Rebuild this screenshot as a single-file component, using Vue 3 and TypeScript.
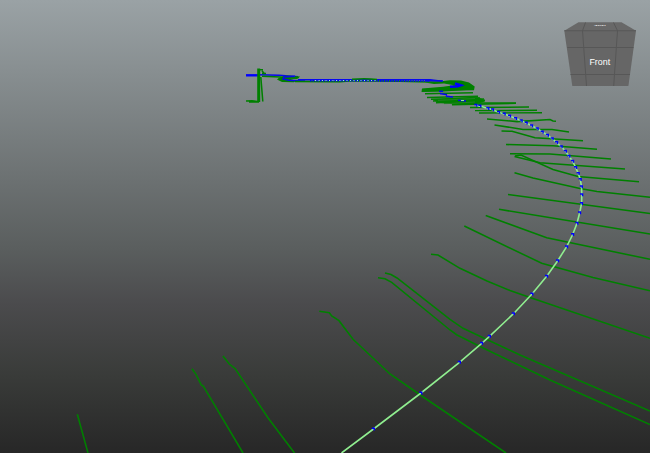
<script setup lang="ts">
type Point = [number, number]

// Cross-section profiles cut perpendicular to the alignment
const sections: string[] = [
  '487,119 517,121.6 550,119.5 553,121 556,121.3',
  '494.5,125 523,129.4 552,129.5 569,132',
  '501.5,131 512,131.3 535,137.7 583,140.7',
  '506,144.5 553,145.8 597,149.3',
  '510,153.7 550,154 611,159',
  '514.5,156.5 540,162.8 625,169',
  '515,156 521,155 553,169.5 578,176.5 639,181.7',
  '514.5,172.7 533,178 580,188.5 597,191.5 650,197.3',
  '508,194.5 650,213.5',
  '499,209.3 650,234',
  '485.7,215.5 546.7,237.8 650,259.3',
  '464.3,226 541.7,263.3 593,277.5 650,290.8',
  '431,254.3 438,255 460,268.3 487,281 510,290.5 530,297.5 650,338.3',
  '385,273 391,274.5 397,278 450,319.3 463,328.3 520,355 650,411',
  '378,277.7 385,278.7 391.7,282.3 450,330 457,335 480,346.5 550,380 650,424.5',
  '319.3,311.3 329.3,312.7 331.7,316 339,320.7 353,339.3 390,374 421.7,396 506,453',
  '77.3,414.3 88,453',
  '192,368.7 196,374.3 201.3,385 203.3,386 243,453',
  '223,356 229.3,364 235.3,368.7 268.3,418.3 294.5,453',
]

const nearSections: string[] = [
  '422,89.8 436,89.2 471,88',
  '422,91 444,90.8 470,89',
  '425,93.8 473,92.7',
  '427,97.5 478,96.3',
  '431,99.3 480,98',
  '433,101 484,99',
  '436,102.7 485,100.3',
  '444,103 516,103',
  '452,104.7 516,103.4',
  '470,107.5 529,107',
  '475,110.6 537,110.3',
  '479,113 542,112.7',
]

const stations: Point[] = [
  [373.5, 429], [421, 393], [459.5, 362.3], [481.7, 343.3], [489.5, 336.3],
  [513.5, 313.7], [532, 294], [546.7, 276.3], [557.7, 260.7], [566.7, 246.7],
  [572.7, 234.5], [577, 223.3], [579.7, 212.7], [581.6, 203.5], [581.8, 194.8],
  [581.5, 186.7], [580.3, 179.4], [578.3, 173.5], [575.7, 167.5], [572.7, 161.3],
  [569, 156.2], [565.5, 151.3], [561.3, 146.8], [556.7, 142.5], [552.3, 138.8],
  [547.5, 135.2], [542.3, 131.9], [537.3, 128.8], [531.7, 125.8], [526.3, 123.1],
  [521.3, 120.7], [515.7, 118.4], [509.7, 115.9], [504.3, 114.1], [498.7, 112.3],
  [492.7, 109.8], [488, 108.6], [480, 106.1], [476, 105.3],
]

const centreline = [[341.5, 453] as Point, ...stations].map((p) => p.join(',')).join(' ')
</script>

<template>
  <main class="viewport">
    <svg class="scene" viewBox="0 0 650 453">
      <g class="section">
        <polyline v-for="(s, i) in sections" :key="i" :points="s" />
      </g>

      <!-- Distant end of the alignment -->
      <g class="far">
        <path class="blue-thick" d="M246 75.3H259" />
        <path class="blue" d="M258 74.8L279 75.2L298 76.8" />
        <path class="green" d="M262 76.2L280 77L297 78.2" />
        <path class="green-thick" d="M258.7 68.5V102" />
        <path class="green" d="M260.8 77L262.8 101.5M246 101L252 100.8L259 101.7M249 102H259M258 69.7H263M262 71L264 73M262 73.5H266" />
        <path class="knot" d="M277 79.5Q279 77 287 75.6L300 76.5L298 78.8L290 78.8L296 80.8L294 82.3L282 82Z" />
        <path class="blue" d="M295 76.3L284 77.1L283 79L289 80.3L305 81" />
        <path class="blue" d="M298 79.7L430 79.8L442 81.2" />
        <path class="green" d="M295 81.5L340 81.7L352 80.8L400 81.2L440 82.3M352 79.3Q365 78.3 377 79.4" />
        <path class="dots" d="M310 80.6L430 81" />
        <path class="sparks" d="M315 80.5H378" />
      </g>

      <!-- Hairpin where profiles overlap -->
      <path class="knot" d="M425 82.6L439 81.4L450 80.3L461 80.6L469 82.5L474.7 86.5L474 90.2L456 90.6L421.5 92L422 88.6L443 86.7L454 85.2L444 83.5L434 84Z" />
      <path class="void" d="M440 85.3L446 84.8L447 85.4L438 86.2Z" />
      <path class="knot" d="M433 99.8L450 98.3L470 97L478 97.2L484 99.7L485 101.5L473 104.7L453 104.3L438 102.7Z" />
      <g class="section near">
        <polyline v-for="(s, i) in nearSections" :key="i" :points="s" />
      </g>
      <path class="void-line" d="M438 100.4L475 98.5M444 103.8L475 102" />
      <path class="blue-thick" d="M455 83.5L461 85.3L458 86.4L450 86.8" />
      <path class="blue" d="M425 80.6L443 80.9M439 91.3H443M440 93.5L447 94.7M446 96.3L453 97M458 100.2L466 100.9" />
      <path class="spark" d="M461 100.5H464" />

      <polyline class="centreline" :points="centreline" />
      <path v-for="([x, y], i) in stations" :key="i" class="station" :d="`M${x - 1.7} ${y - 1.5}h3.2v3h-1.4v-1.5h-1.8z`" />

      <g class="cube">
        <path class="cube-top" d="M578.5 22.3H621.5L636 30.7H564.3Z" />
        <path class="cube-front" d="M564.3 30.7H636L628.4 86H572.3Z" />
        <path class="cube-edge" d="M564.3 30.7H636M567.3 47.5H633.5M570.5 74.5H630M585.5 22.5L582.5 30.7L586.5 86M613.5 22.5L617.5 30.7L613.7 86" />
        <text class="cube-label" x="599.8" y="65.1">Front</text>
        <text class="cube-label top" transform="translate(600 26.2) scale(1.25 .35)">Top</text>
      </g>
    </svg>
  </main>
</template>

<style>
body {
  margin: 0;
  overflow: hidden;
}
</style>

<style scoped>
.viewport {
  width: 650px;
  height: 453px;
  overflow: hidden;
  background: linear-gradient(#9aa2a5 0%, #5a5e5e 55%, #4b4b4d 67%, #393b39 83%, #272727 100%);
}
.scene {
  display: block;
  width: 100%;
  height: 100%;
}
.section,
.green,
.green-thick,
.blue,
.blue-thick,
.centreline,
.dots,
.sparks {
  fill: none;
  stroke: #008000;
  stroke-width: 1.55;
}
.near {
  stroke-width: 1.45;
}
.green-thick {
  stroke-width: 3;
}
.blue {
  stroke: #0808ee;
}
.blue-thick {
  stroke: #0000ff;
  stroke-width: 2.4;
}
.dots {
  stroke: #0000ff;
  stroke-width: 1.6;
  stroke-dasharray: 1.5 1;
}
.sparks {
  stroke: #99dddd;
  stroke-width: 1;
  stroke-dasharray: 1 2.5;
}
.spark {
  fill: none;
  stroke: #90ee90;
  stroke-width: 1;
}
.knot {
  fill: #008000;
}
.void {
  fill: #808586;
}
.void-line {
  fill: none;
  stroke: #477f48;
  stroke-width: 0.5;
}
.centreline {
  stroke: #90ee90;
  stroke-width: 1.6;
}
.station {
  fill: #0000ff;
}
.cube-top {
  fill: #686868;
}
.cube-front {
  fill: #666666;
}
.cube-edge {
  fill: none;
  stroke: #575757;
  stroke-width: 1;
}
.cube-label {
  fill: #ffffff;
  font: 8.9px "Liberation Sans", Arial, sans-serif;
  text-anchor: middle;
}
.cube-label.top {
  font-size: 6px;
}
</style>
